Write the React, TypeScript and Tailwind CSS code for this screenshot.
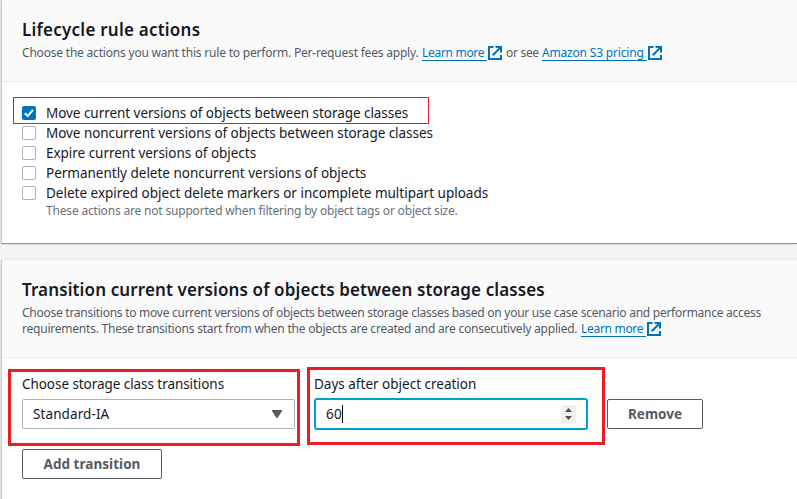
import React from "react";

function ExternalIcon() {
  return (
    <svg viewBox="0 0 14 14" className="inline-block h-[14px] w-[14px] shrink-0" fill="none" stroke="#0073bb" strokeWidth="2">
      <path d="M5.500 1H1v12h12V9" />
      <path d="M7.500 1h5.500v5.500" />
      <path d="M12.500 1.500 4.700 9.300" />
    </svg>
  );
}

function ExternalLink({ label, width, tracking }: { label: string; width: string; tracking: string }) {
  return (
    <a className="inline-flex items-start text-[#0073bb]">
      <span className={"mr-px h-[16px] whitespace-pre border-b border-[#0073bb] leading-[16px] " + width + " " + tracking}>{label}</span>
      <span className="mt-px flex"><ExternalIcon /></span>
    </a>
  );
}

function Checkbox({ checked }: { checked?: boolean }) {
  return checked ? (
    <span className="flex h-[14px] w-[14px] shrink-0 items-center justify-center rounded-[2px] bg-[#0073bb]">
      <svg viewBox="0 0 14 14" className="h-[14px] w-[14px]" fill="none" stroke="white" strokeWidth="2">
        <path d="M2.8 7.2 5.8 10 11 3.8" />
      </svg>
    </span>
  ) : (
    <span className="h-[14px] w-[14px] shrink-0 rounded-[2px] border border-[#aab7b8] bg-white" />
  );
}

function Option({ label, checked, tracking }: { label: string; checked?: boolean; tracking: string }) {
  return (
    <div className="flex h-5 items-center">
      <Checkbox checked={checked} />
      <span className={"ml-[10px] whitespace-nowrap text-[13.5px] leading-5 " + tracking}>{label}</span>
    </div>
  );
}

export default function App() {
  return (
    <div className="h-[499px] w-[797px] overflow-hidden bg-[#f2f3f3] pl-px font-['Noto_Sans',sans-serif] text-[#16191f]">
      <section className="h-[244px] border-b border-l border-b-[#879596] border-l-[#c4cccc] bg-white shadow-[-1px_1px_0_#e0e4e4]">
        <header className="h-[82px] border-b border-[#eaeded] bg-[#fafafa] pl-5 pt-[19px]">
          <h2 className="h-[22px] whitespace-nowrap text-[17px] font-semibold leading-[22px] tracking-[0.23px]">
            <span>Lifecycle rule actions</span>
          </h2>
          <div className="mt-1 flex h-4 items-start whitespace-pre text-[12px] leading-4 text-[#545b64]">
            <span className="w-[400px] tracking-[-0.2px]">Choose the actions you want this rule to perform. Per-request fees apply. </span>
            <ExternalLink label="Learn more" width="w-[65px]" tracking="tracking-[-0.3px]" />
            <span className="w-[40px] pl-1 tracking-[-0.3px]">or see</span>
            <ExternalLink label="Amazon S3 pricing" width="w-[105px]" tracking="tracking-[-0.18px]" />
          </div>
        </header>
        <div className="relative pl-5 pt-[21px]">
          <div className="absolute left-[11px] top-[15px] h-[27px] w-[416px] border border-[#ed1c24]" />
          <Option checked label="Move current versions of objects between storage classes" tracking="tracking-[-0.045px]" />
          <Option label="Move noncurrent versions of objects between storage classes" tracking="tracking-[-0.045px]" />
          <Option label="Expire current versions of objects" tracking="tracking-[-0.03px]" />
          <Option label="Permanently delete noncurrent versions of objects" tracking="tracking-[-0.01px]" />
          <Option label="Delete expired object delete markers or incomplete multipart uploads" tracking="tracking-[0px]" />
          <p className="ml-6 whitespace-nowrap text-[12px] leading-4 tracking-[-0.182px] text-[#687078]">
            <span>These actions are not supported when filtering by object tags or object size.</span>
          </p>
        </div>
      </section>

      <section className="mt-[15px] h-[260px] border-l border-t border-l-[#c4cccc] border-t-[#eaeded] bg-white shadow-[-1px_1px_0_#e0e4e4]">
        <header className="h-[98px] border-b border-[#eaeded] bg-[#fafafa] pl-5 pt-[19px]">
          <h2 className="h-[22px] whitespace-nowrap text-[17px] font-semibold leading-[22px] tracking-[0.12px]">
            <span>Transition current versions of objects between storage classes</span>
          </h2>
          <div className="mt-1 whitespace-pre text-[12px] leading-4 text-[#545b64]">
            <div className="flex h-4">
              <span className="tracking-[-0.263px]">Choose transitions to move current versions of objects between storage classes based on your use case scenario and performance access</span>
            </div>
            <div className="flex h-4 items-start">
              <span className="w-[559px] tracking-[-0.22px]">requirements. These transitions start from when the objects are created and are consecutively applied. </span>
              <ExternalLink label="Learn more" width="w-[65px]" tracking="tracking-[-0.3px]" />
            </div>
          </div>
        </header>
        <div className="relative pl-5 pt-4">
          <div className="absolute left-[6px] top-[11px] h-[77px] w-[292px] border-[3px] border-[#ed1c24]" />
          <div className="absolute left-[305px] top-[9px] h-[78px] w-[298px] border-[3px] border-[#ed1c24]" />
          <div className="flex">
            <label className="w-[273px] text-[13.5px]">
              <span className="block h-5 leading-5 tracking-[-0.06px]">Choose storage class transitions</span>
              <span className="mt-[5px] flex h-[30px] items-center justify-between rounded-[2px] border border-[#aab7b8] pl-[10px] pr-3">
                <span className="tracking-[0.1px]">Standard-IA</span>
                <svg viewBox="0 0 10 8" className="h-2 w-[10px]" fill="#545b64"><path d="M0 0h10v1L5.500 8h-1L0 1z" /></svg>
              </span>
            </label>
            <label className="ml-[19px] w-[274px] text-[13.5px]">
              <span className="block h-5 leading-5">Days after object creation</span>
              <span className="mt-1 flex h-8 items-center rounded-[3px] border-2 border-[#00a1c9] pl-[10px] pr-[10px]">
                <span className="tracking-[0.3px]">60</span>
                <span className="h-[18px] w-px bg-black" />
                <span className="ml-auto flex h-[18px] w-[15px] items-center justify-center bg-[#f0f0f0]">
                  <svg viewBox="0 0 7 12" className="h-3 w-[7px]" fill="#505050"><path d="M0 4 3.500 0 7 4zM0 8h7L3.500 12z" /></svg>
                </span>
              </span>
            </label>
            <button className="ml-[19px] mt-[25px] h-[30px] w-24 rounded-[2px] border border-[#545b64] text-[13.5px] font-bold text-[#545b64]">Remove</button>
          </div>
          <button className="mt-[19px] block h-[30px] w-[140px] rounded-[2px] border border-[#545b64] text-[13.5px] font-bold tracking-[0.04px] text-[#545b64]">Add transition</button>
        </div>
      </section>
    </div>
  );
}
